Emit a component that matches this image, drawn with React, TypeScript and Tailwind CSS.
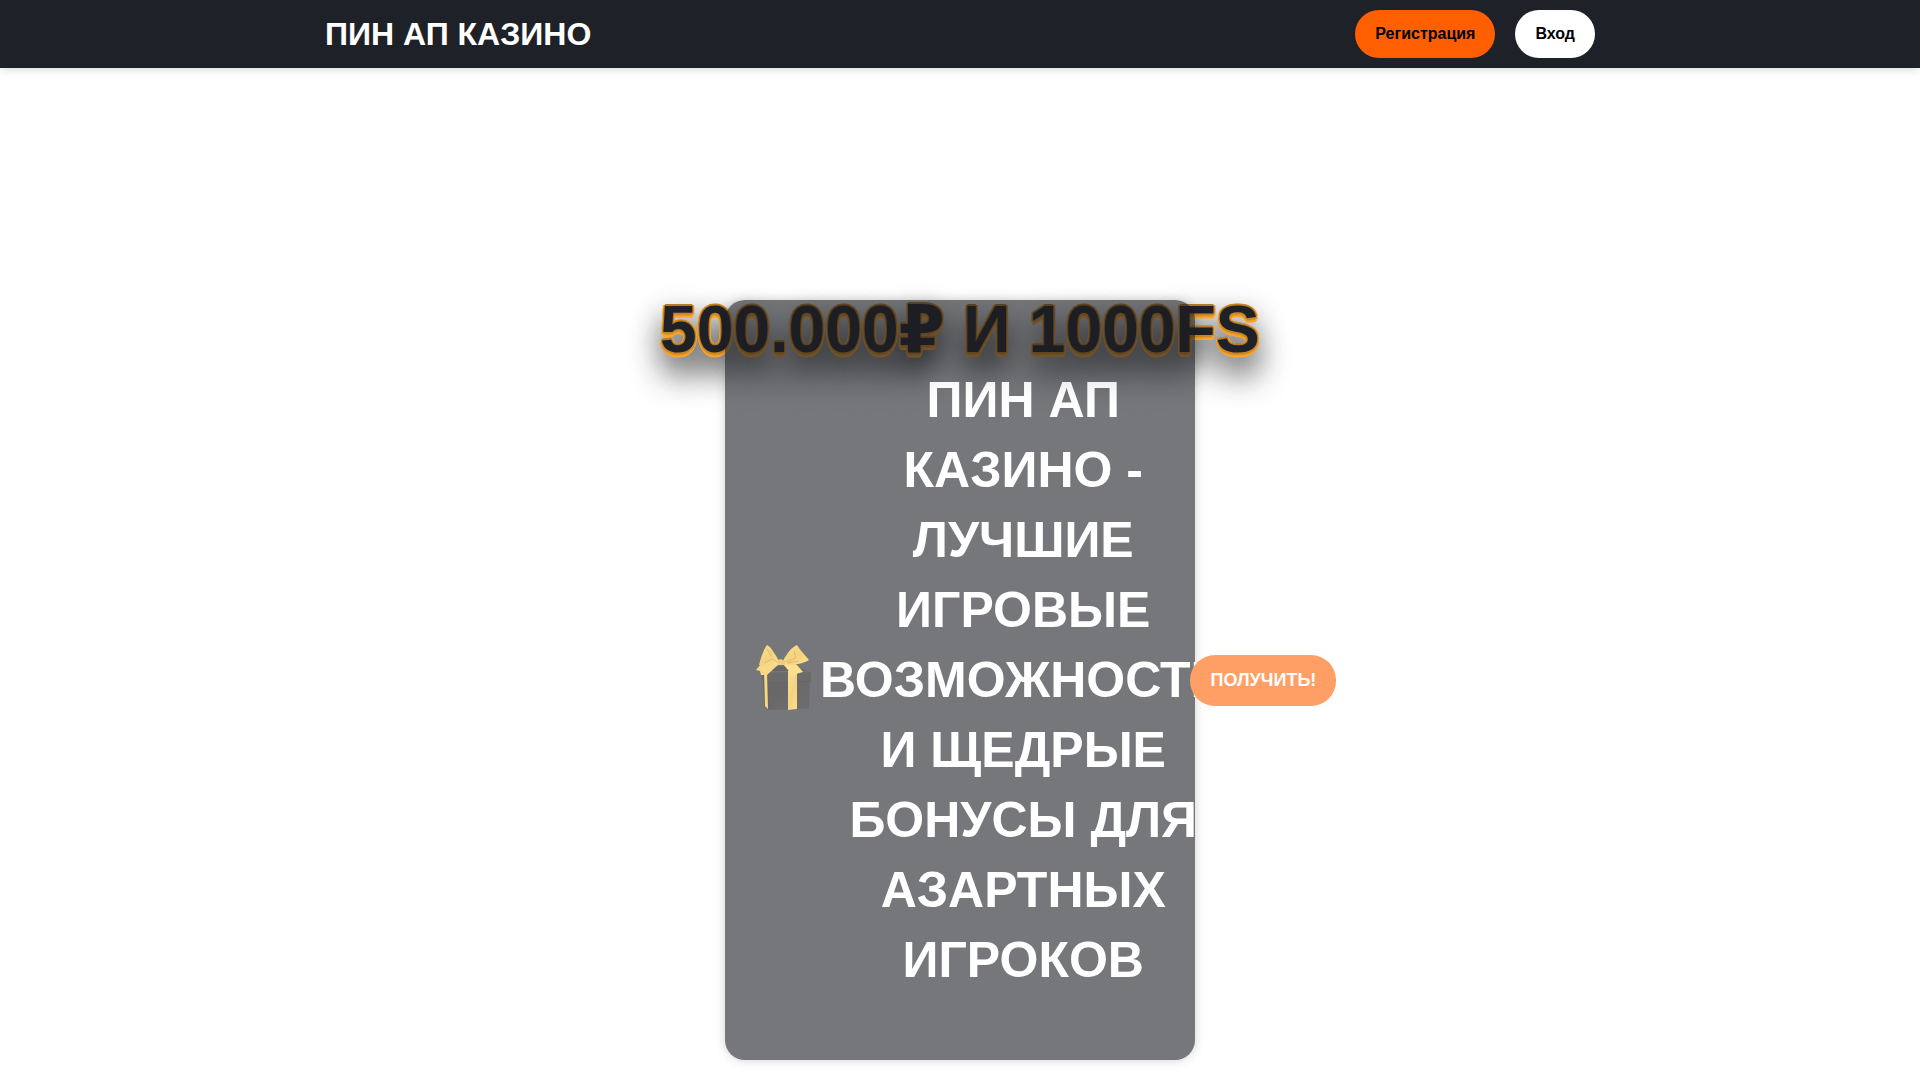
function GiftBox() {
  return (
    <svg viewBox="1 0 60 72" className="h-[72px] w-[60px] shrink-0" aria-hidden="true">
      <defs>
        <linearGradient id="box-front" x1="0" y1="0" x2="1" y2="1">
          <stop offset="0" stopColor="#020203" />
          <stop offset="1" stopColor="#0e0e10" />
        </linearGradient>
        <linearGradient id="ribbon" x1="0" y1="0" x2="1" y2="1">
          <stop offset="0" stopColor="#ffd04a" />
          <stop offset="0.5" stopColor="#eeb52c" />
          <stop offset="1" stopColor="#ffcb38" />
        </linearGradient>
      </defs>
      <path d="M9 36 15 38 15 66 10 60Z" fill="#020204" />
      <path d="M15 38 56 36 55 65 15 66Z" fill="url(#box-front)" />
      <path d="M8 25 14 28 14 39 8 36Z" fill="#060608" />
      <path d="M14 28 57 27 57 37 14 39Z" fill="#0a0a0c" />
      <path d="M8 25 26 22 57 27 14 28Z" fill="#000000" />
      <path d="M14 39 57 37" stroke="#000000" strokeWidth="1" />
      <path d="M14 28 57 27" stroke="#26262a" strokeWidth="1" />
      <path d="M10 26 13 27 14 65 11 62Z" fill="#f5bd2a" />
      <path d="M34 27 43 27 43 65 34 66Z" fill="url(#ribbon)" />
      <path d="M25 20 15 18 7 20 2 26 6 27 7 31 13 31Z" fill="#f6bf36" />
      <path d="M29 20 34 26 39 33 42 30 49 28 43 21 34 17Z" fill="#ffcd46" />
      <path
        d="M25 17C21 10 17 3 13 1C10 5 7 13 5 21C11 23 19 22 25 20Z"
        fill="url(#ribbon)"
      />
      <path d="M29 17C33 9 38 3 43 1C46 6 51 11 55 16C49 20 37 22 29 20Z" fill="url(#ribbon)" />
      <path d="M10 19 18 15 25 19M13 5 18 13M32 18 42 14 40 7M34 19 45 17" fill="none" stroke="#c58d1f" strokeWidth="1" />
      <path d="M24 16 27 15 31 17 31 21 24 21Z" fill="#e2ab2d" />
    </svg>
  );
}

export default function App() {
  return (
    <div className="min-h-screen bg-white font-['Liberation_Sans','DejaVu_Sans',sans-serif]">
      <header className="bg-[#1f2128] shadow-[0_0_10px_rgba(0,0,0,0.2)]">
        <div className="mx-auto flex max-w-[1270px] items-center justify-between py-[10px]">
          <a href="#" className="text-[32px] leading-[48px] font-bold text-white uppercase">
            Пин Ап Казино
          </a>
          <div className="flex gap-5">
            <button type="button" className="rounded-3xl bg-[#ff5f00] px-5 py-3 text-base font-bold text-black">
              Регистрация
            </button>
            <button type="button" className="rounded-3xl bg-white px-5 py-3 text-base font-bold text-black">
              Вход
            </button>
          </div>
        </div>
      </header>

      <main className="grid justify-center pt-[232px]">
        <p className="col-start-1 row-start-1 justify-self-center text-[66px] leading-[58px] font-bold whitespace-nowrap text-[#1f2128] [text-shadow:0_-1px_0_#b57a22,-1px_-1px_0_#b57a22,1px_-1px_0_#b57a22,-1px_1px_0_#c98825,1px_1px_0_#c98825,0_2px_3px_rgba(0,0,0,0.3),-2px_-1px_0_#ffa92f,2px_-1px_0_#ffa92f,0_-2px_0_#b57a22,-2px_2px_0_#ffa92f,2px_2px_0_#ffa92f,-1px_4px_0_#ffa92f,1px_4px_0_#ffa92f,0_5px_0_#ffa92f,0_8px_30px_rgba(0,0,0,0.4),0_22px_32px_rgba(0,0,0,0.9)]">
          500.000₽ И 1000FS
        </p>
        <section className="relative col-start-1 row-start-1 flex w-[470px] items-center justify-self-center rounded-[20px] bg-[#1b1d23] px-[30px] py-[65px] opacity-60 shadow-[0_0_10px_rgba(0,0,0,0.3)]">
          <GiftBox />
          <h1 className="ml-[5px] w-min shrink-0 text-center text-[50px] leading-[70px] font-bold text-white uppercase">
            Пин Ап Казино - лучшие игровые возможности и щедрые бонусы для азартных игроков
          </h1>
          <button type="button" className="-ml-9 shrink-0 rounded-[25px] bg-[#ff5f00] px-5 py-3 text-lg leading-[27px] font-bold text-white">
            ПОЛУЧИТЬ!
          </button>
        </section>
      </main>
    </div>
  );
}
